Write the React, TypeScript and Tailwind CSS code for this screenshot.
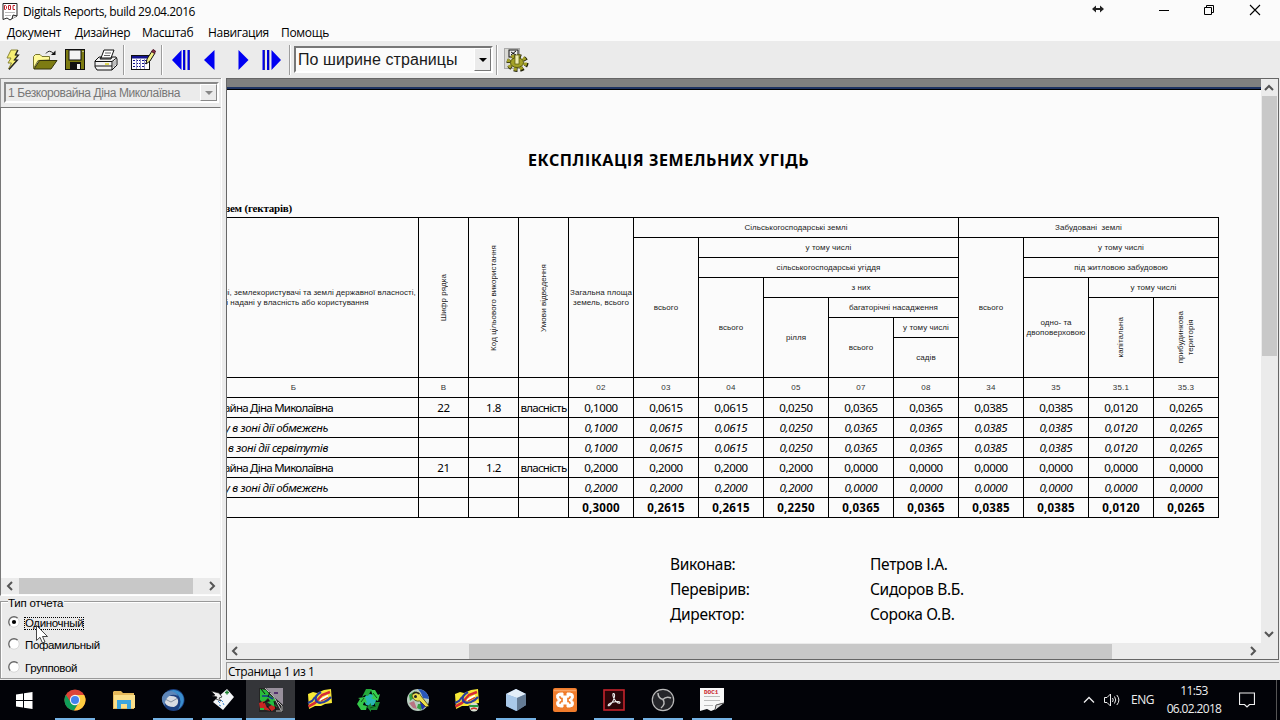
import type { ReactNode } from "react";
import clsx from "clsx";

const menuItems = [
  { label: "Документ", className: "w-[68px]" },
  { label: "Дизайнер", className: "w-[67px]" },
  { label: "Масштаб", className: "w-[66px]" },
  { label: "Навигация", className: "w-[73px]" },
  { label: "Помощь", className: "w-[60px]" },
];

type HeaderCell = { text: string; place: string; vertical?: boolean };

const headerCells: HeaderCell[] = [
  {
    text: "Власники землі, землекористувачі та землі державної власності,\nякі надані у власність або користування",
    place: "col-start-1 row-start-1 row-span-8",
  },
  { text: "Шифр рядка", place: "col-start-2 row-start-1 row-span-8", vertical: true },
  { text: "Код цільового використання", place: "col-start-3 row-start-1 row-span-8", vertical: true },
  { text: "Умови відведення", place: "col-start-4 row-start-1 row-span-8", vertical: true },
  { text: "Загальна площа\nземель, всього", place: "col-start-5 row-start-1 row-span-8" },
  { text: "Сільськогосподарські землі", place: "col-start-6 col-span-5 row-start-1" },
  { text: "всього", place: "col-start-6 row-start-2 row-span-7" },
  { text: "у тому числі", place: "col-start-7 col-span-4 row-start-2" },
  { text: "сільськогосподарські угіддя", place: "col-start-7 col-span-4 row-start-3" },
  { text: "всього", place: "col-start-7 row-start-4 row-span-5" },
  { text: "з них", place: "col-start-8 col-span-3 row-start-4" },
  { text: "рілля", place: "col-start-8 row-start-5 row-span-4" },
  { text: "багаторічні насадження", place: "col-start-9 col-span-2 row-start-5" },
  { text: "всього", place: "col-start-9 row-start-6 row-span-3" },
  { text: "у тому числі", place: "col-start-10 row-start-6" },
  { text: "садів", place: "col-start-10 row-start-7 row-span-2" },
  { text: "Забудовані  землі", place: "col-start-11 col-span-4 row-start-1" },
  { text: "всього", place: "col-start-11 row-start-2 row-span-7" },
  { text: "у тому числі", place: "col-start-12 col-span-3 row-start-2" },
  { text: "під житловою забудовою", place: "col-start-12 col-span-3 row-start-3" },
  { text: "одно- та\nдвоповерховою", place: "col-start-12 row-start-4 row-span-5" },
  { text: "у тому числі", place: "col-start-13 col-span-2 row-start-4" },
  { text: "капітальна", place: "col-start-13 row-start-5 row-span-4", vertical: true },
  { text: "прибудинкова\nтериторія", place: "col-start-14 row-start-5 row-span-4", vertical: true },
];

const columnCodes = ["Б", "В", "", "", "02", "03", "04", "05", "07", "08", "34", "35", "35.1", "35.3"];

type Row = { name: string; kind: "plain" | "italic" | "total"; cells: string[] };

const rows: Row[] = [
  {
    name: "Безкоровайна Діна Миколаївна",
    kind: "plain",
    cells: ["22", "1.8", "власність", "0,1000", "0,0615", "0,0615", "0,0250", "0,0365", "0,0365", "0,0385", "0,0385", "0,0120", "0,0265"],
  },
  {
    name: "у в зоні дії обмежень",
    kind: "italic",
    cells: ["", "", "", "0,1000", "0,0615", "0,0615", "0,0250", "0,0365", "0,0365", "0,0385", "0,0385", "0,0120", "0,0265"],
  },
  {
    name: "у в зоні дії сервітутів",
    kind: "italic",
    cells: ["", "", "", "0,1000", "0,0615", "0,0615", "0,0250", "0,0365", "0,0365", "0,0385", "0,0385", "0,0120", "0,0265"],
  },
  {
    name: "Безкоровайна Діна Миколаївна",
    kind: "plain",
    cells: ["21", "1.2", "власність", "0,2000", "0,2000", "0,2000", "0,2000", "0,0000", "0,0000", "0,0000", "0,0000", "0,0000", "0,0000"],
  },
  {
    name: "у в зоні дії обмежень",
    kind: "italic",
    cells: ["", "", "", "0,2000", "0,2000", "0,2000", "0,2000", "0,0000", "0,0000", "0,0000", "0,0000", "0,0000", "0,0000"],
  },
  {
    name: "",
    kind: "total",
    cells: ["", "", "", "0,3000", "0,2615", "0,2615", "0,2250", "0,0365", "0,0365", "0,0385", "0,0385", "0,0120", "0,0265"],
  },
];

const signatures = [
  ["Виконав:", "Петров І.А."],
  ["Перевірив:", "Сидоров В.Б."],
  ["Директор:", "Сорока О.В."],
];

function Chevron({ dir }: { dir: "left" | "right" | "up" | "down" }) {
  const d = {
    left: "M7 1 L3 5 L7 9",
    right: "M3 1 L7 5 L3 9",
    up: "M1 7 L5 3 L9 7",
    down: "M1 3 L5 7 L9 3",
  }[dir];
  return (
    <svg width="10" height="10" viewBox="0 0 10 10" className="shrink-0">
      <path d={d} fill="none" stroke="#555" strokeWidth="2" />
    </svg>
  );
}

function TitleBar() {
  return (
    <div className="flex h-[22px] items-center pl-[2px]">
      <svg width="16" height="18" viewBox="0 0 16 18" className="mt-px shrink-0">
        <path d="M1 .5 H15 V13 L11 15 L8 17 L5 15 L1 16.5 Z" fill="#fff" stroke="#222" />
        <path d="M10 16 L11 12 L15 13" fill="#ddd" stroke="#222" />
        <path d="M2.5 2.5 v4 h1 l1 -1 v-2 l-1 -1 z M6.5 2.5 h2 v4 h-2 z M13 2.5 h-2 v4 h2" fill="none" stroke="#c3222c" />
        <path d="M3 9.5 H13 M3 12.5 H9" stroke="#bbb" />
      </svg>
      <span className="ml-[5px] mt-[2px] text-[12px] tracking-[-0.42px] whitespace-nowrap">
        Digitals Reports, build 29.04.2016
      </span>
      <div className="ml-auto flex items-center">
        <svg width="12" height="8" viewBox="0 0 12 8" className="mr-[54px] -mt-[5px]">
          <path d="M0 4 L4 .5 V3 H8 V.5 L12 4 L8 7.5 V5 H4 V7.5 Z" fill="#222" />
        </svg>
        <svg width="12" height="10" viewBox="0 0 12 10" className="mr-[33px] -mt-[2px]">
          <path d="M1 5.500 H11" stroke="#000" />
        </svg>
        <svg width="12" height="12" viewBox="0 0 12 12" className="mr-[34px] -mt-[2px]">
          <path d="M1.500 3.500 H8.500 V10.500 H1.500 Z M3.500 3.500 V1.500 H10.500 V8.500 H8.500" fill="none" stroke="#000" />
        </svg>
        <svg width="12" height="12" viewBox="0 0 12 12" className="mr-[19px] -mt-[2px]">
          <path d="M1 1 L11 11 M11 1 L1 11" stroke="#000" strokeWidth="1.1" />
        </svg>
      </div>
    </div>
  );
}

function MenuBar() {
  return (
    <div className="flex h-[19px] items-center pl-[7px] text-[12px] tracking-[-0.3px]">
      {menuItems.map((item) => (
        <span key={item.label} className={clsx("mt-[3px] shrink-0 whitespace-nowrap", item.className)}>
          {item.label}
        </span>
      ))}
    </div>
  );
}

function Separator({ className }: { className?: string }) {
  return <div className={clsx("h-[30px] w-[2px] shrink-0 border-r border-l border-l-[#9d9d9d] border-r-white", className)} />;
}

function Toolbar() {
  return (
    <div className="flex h-[37px] items-center bg-[#ebebeb]">
      <svg width="16" height="22" viewBox="0 0 16 22" className="ml-[6px] shrink-0">
        <path d="M5 1 H11.500 L9 6 H12 L8 11 H11 L2.500 20 L5.500 14 H2 L5 9 H1 Z" fill="#f5ee72" stroke="#8b8635" />
        <path d="M12 1 L9.500 6 H12.500 L8.500 11 H11.500 L3 20.500" fill="none" stroke="#222" strokeWidth="1.200" />
      </svg>
      <svg width="26" height="20" viewBox="0 0 26 20" className="ml-[11px] shrink-0">
        <path d="M.5 18.500 V6.500 L2.500 4.500 H7 L9 6.500 H16.500 V10 L5 10.500 Z" fill="#fffa9a" stroke="#77752c" />
        <path d="M1 19 L6.500 10.500 H24 L18 19 Z" fill="#7d7c12" stroke="#33330c" />
        <path d="M13 3.500 Q16 -1 20.500 3.500" fill="none" stroke="#222" />
        <path d="M22.500 .5 V5 H18 Z" fill="#111" />
      </svg>
      <svg width="20" height="21" viewBox="0 0 20 21" className="ml-[6px] shrink-0">
        <rect x=".5" y=".5" width="19" height="20" fill="#7d7c12" stroke="#111" />
        <rect x="4" y="1" width="12" height="10" fill="#f4f4f4" stroke="#111" />
        <rect x="5" y="13" width="11" height="8" fill="#111" />
        <rect x="12" y="15" width="3" height="5" fill="#eee" />
        <path d="M17.500 2.500 h1" stroke="#fff" />
      </svg>
      <svg width="24" height="22" viewBox="0 0 24 22" className="ml-[9px] shrink-0">
        <path d="M7 9 L10 1 H20 L17 9 Z" fill="#fff" stroke="#111" />
        <path d="M11 4 H17 M10 6.500 H16" stroke="#666" />
        <path d="M1 12 L5 8 H7 L6 10 H17 L18 8 H22 L23 10 V16 L18 21 H3 L1 18 Z" fill="#f2f2f2" stroke="#111" />
        <path d="M1 12.500 H18 L22.500 9 M18 12.500 V21 M1 17 H18" fill="none" stroke="#111" />
        <path d="M11 15 H15" stroke="#d8cf27" strokeWidth="1.500" />
        <path d="M20 12 V18 M22 11 V16" stroke="#888" />
      </svg>
      <Separator className="ml-[5px]" />
      <svg width="25" height="22" viewBox="0 0 25 22" className="ml-[6px] shrink-0">
        <rect x=".5" y="6.500" width="18" height="14" fill="#fff" stroke="#111" />
        <rect x="1" y="7" width="17" height="2.500" fill="#14148f" />
        <path d="M2 11.500 H17 M2 14.500 H17 M2 17.500 H14" stroke="#14148f" strokeDasharray="2 1" />
        <path d="M5.500 10 V20 M9.500 10 V20 M13.500 10 V20" stroke="#9494c5" />
        <path d="M15 15 L16 10 L21 2 L24 4 L19 12 Z" fill="#f3ef88" stroke="#111" />
        <path d="M20.500 2.500 L22 .5 L24.500 2 L23.500 4.500 Z" fill="#8b2f45" stroke="#50192a" />
      </svg>
      <Separator className="ml-[5px]" />
      <svg width="19" height="20" viewBox="0 0 19 20" className="ml-[9px] shrink-0">
        <path d="M9.500 0 V20 L0 10 Z M11 0 h2 V20 h-2 Z M15.500 0 h2 V20 h-2 Z" fill="#0000f2" />
        <path d="M13 0 V20 M17.500 0 V20" stroke="#00005e" strokeWidth=".6" />
      </svg>
      <svg width="11" height="20" viewBox="0 0 11 20" className="ml-[13px] shrink-0">
        <path d="M10.500 0 V20 L0 10 Z" fill="#0000f2" />
      </svg>
      <svg width="11" height="20" viewBox="0 0 11 20" className="ml-[23px] shrink-0">
        <path d="M.5 0 V20 L10.500 10 Z" fill="#0000f2" />
      </svg>
      <svg width="19" height="20" viewBox="0 0 19 20" className="ml-[13px] shrink-0">
        <path d="M9.500 0 V20 L19 10 Z M.5 0 h2 V20 h-2 Z M5 0 h2 V20 h-2 Z" fill="#0000f2" />
        <path d="M2.500 0 V20 M7 0 V20" stroke="#00005e" strokeWidth=".6" />
      </svg>
      <Separator className="ml-[8px]" />
      <div className="ml-[3px] flex h-[27px] w-[199px] shrink-0 items-center border-2 border-[#777] border-r-white border-b-white bg-[#fbfbfb] font-['Liberation_Sans',sans-serif]">
        <span className="pl-[2px] text-[16px] leading-none tracking-[0.08px] whitespace-nowrap text-[#1a1a1a]">
          По ширине страницы
        </span>
        <div className="ml-auto flex h-full w-[17px] items-center justify-center border border-white border-r-[#777] border-b-[#777] bg-[#ebebeb]">
          <svg width="8" height="4" viewBox="0 0 8 4">
            <path d="M0 0 H8 L4 4 Z" fill="#000" />
          </svg>
        </div>
      </div>
      <Separator className="ml-[3px]" />
      <svg width="25" height="25" viewBox="0 0 25 25" className="ml-[6px] shrink-0">
        <rect x=".5" y="1.500" width="15" height="20" fill="#d9d9d4" stroke="#aaa" />
        <rect x="5" y="3" width="9" height="7" fill="#eee" stroke="#111" />
        <path d="M7 5 L12 8 M12 4 L7 8" stroke="#111" />
        <ellipse cx="13.500" cy="16" rx="9" ry="7" fill="none" stroke="#22220a" strokeWidth="4" strokeDasharray="3.600 2.680" />
        <ellipse cx="13" cy="15.500" rx="8.500" ry="6.500" fill="none" stroke="#a3a126" strokeWidth="3.500" strokeDasharray="3 2.890" />
        <ellipse cx="13" cy="15.500" rx="6.500" ry="5" fill="#a3a126" stroke="#56550f" />
        <rect x="11" y="8" width="4" height="9" fill="#eeedb0" stroke="#55540f" strokeWidth=".7" />
      </svg>
    </div>
  );
}

function Radio({ label, checked, className }: { label: string; checked?: boolean; className?: string }) {
  return (
    <div className={clsx("flex h-[14px] items-center", className)}>
      <svg width="12" height="12" viewBox="0 0 12 12" className="-mt-[2px] shrink-0">
        <circle cx="6" cy="6" r="5" fill="#fff" />
        <path d="M2.300 9.700 A5.200 5.200 0 0 1 9.700 2.300" fill="none" stroke="#666" strokeWidth="1.300" />
        <path d="M9.700 2.300 A5.200 5.200 0 0 1 2.300 9.700" fill="none" stroke="#d8d8d8" />
        {checked && <circle cx="6" cy="6" r="2.100" fill="#000" />}
      </svg>
      <span
        className={clsx(
          "ml-[4px] border border-dotted text-[11.500px] leading-[11px] tracking-[-0.35px] whitespace-nowrap",
          checked ? "border-black" : "border-transparent",
        )}
      >
        {label}
      </span>
    </div>
  );
}

function Sidebar() {
  return (
    <div className="flex w-[221px] shrink-0 flex-col font-['Liberation_Sans',sans-serif]">
      <div className="h-[29px] border-t border-l border-[#999] pt-[3px] pl-[3px]">
        <div className="flex h-[21px] w-[215px] items-center border-2 border-[#888] border-r-white border-b-white">
          <span className="pl-[2px] text-[12px] leading-none tracking-[-0.4px] whitespace-nowrap text-[#777]">
            1 Безкоровайна Діна Миколаївна
          </span>
          <div className="ml-auto flex h-full w-[17px] items-center justify-center border border-white border-r-[#888] border-b-[#888]">
            <svg width="8" height="4" viewBox="0 0 8 4">
              <path d="M0 0 H8 L4 4 Z" fill="#888" />
            </svg>
          </div>
        </div>
      </div>
      <div className="flex h-[489px] flex-col border border-[#777] border-r-[#f4f4f4] border-b-white bg-[#fbfbfb]">
        <div className="mt-auto mb-px flex h-[16px] items-center bg-[#ebebeb] pr-[3px] pl-[4px]">
          <Chevron dir="left" />
          <div className="ml-[4px] h-full w-[174px] bg-[#c8c8c8]" />
          <div className="ml-auto flex">
            <Chevron dir="right" />
          </div>
        </div>
      </div>
      <div className="mt-[5px] h-[78px] border border-[#999] pl-[7px] shadow-[inset_1px_1px_0_#fff]">
        <p className="-mt-[5px] w-[56px] bg-[#ebebeb] text-[11.500px] leading-[13px] tracking-[-0.2px] whitespace-nowrap">
          Тип отчета
        </p>
        <Radio label="Одиночный" checked className="mt-[6px]" />
        <Radio label="Пофамильный" className="mt-[8px]" />
        <Radio label="Групповой" className="mt-[9px]" />
      </div>
    </div>
  );
}

function Cell({ className, children }: { className?: string; children?: ReactNode }) {
  return (
    <div className={clsx("flex items-center justify-center border-r border-b border-black whitespace-pre", className)}>
      {children}
    </div>
  );
}

function ReportTable() {
  return (
    <div className="-ml-[58px] grid w-[1050px] shrink-0 grid-cols-[250px_50px_50px_50px_repeat(10,65px)] grid-rows-[repeat(15,20px)] border-t border-black">
      {headerCells.map((cell, i) => (
        <Cell
          key={i}
          className={clsx(
            "text-center font-['Liberation_Sans',sans-serif] text-[8px] leading-[10px] tracking-[0.06px] text-[#222]",
            cell.place,
          )}
        >
          <span className={cell.vertical ? "rotate-180 [writing-mode:vertical-rl]" : undefined}>{cell.text}</span>
        </Cell>
      ))}
      {columnCodes.map((code, i) => (
        <Cell key={i} className="font-['Liberation_Sans',sans-serif] text-[8px] tracking-[0.2px] text-[#333]">
          {code}
        </Cell>
      ))}
      {rows.map((row, i) => (
        <div
          key={i}
          className={clsx(
            "contents text-[11.500px] leading-none",
            row.kind === "plain" && "tracking-[-0.4px]",
            row.kind === "italic" && "tracking-[-0.3px] italic",
            row.kind === "total" && "font-bold tracking-[0.25px]",
          )}
        >
          <div
            className={clsx(
              "flex items-center justify-end border-r border-b border-black whitespace-nowrap",
              row.kind === "plain" ? "pr-[85px] tracking-[-0.75px]" : "pr-[90px] tracking-[-0.4px]",
            )}
          >
            {row.name}
          </div>
          {row.cells.map((value, j) => (
            <Cell key={j} className={value === "власність" ? "tracking-[-0.75px]" : undefined}>
              {value}
            </Cell>
          ))}
        </div>
      ))}
    </div>
  );
}

function Viewer() {
  return (
    <div className="flex min-w-0 flex-1 flex-col">
      <div className="flex h-[582px] border border-[#666]">
        <div className="flex w-[1034px] shrink-0 flex-col">
          <div className="h-[8px] bg-[#808080]" />
          <div className="h-[2px] bg-[#1f3362]" />
          <div className="h-px bg-black" />
          <div className="flex h-[553px] flex-col overflow-hidden bg-[#fbfbfb] font-['Noto_Sans',sans-serif]">
            <h1 className="mt-[60px] ml-[301px] text-[16px] leading-[20px] font-bold tracking-[0.58px] whitespace-nowrap">
              ЕКСПЛІКАЦІЯ ЗЕМЕЛЬНИХ УГІДЬ
            </h1>
            <p className="mt-[31px] -ml-[10px] w-[75px] text-right font-['Liberation_Serif',serif] text-[11px] leading-[14px] font-bold tracking-[-0.2px] whitespace-nowrap">
              зем (гектарів)
            </p>
            <div className="mt-[2px]">
              <ReportTable />
            </div>
            <div className="mt-[34px] ml-[443px] grid grid-cols-[200px_200px] text-[15.500px] leading-[25px] tracking-[-0.3px]">
              {signatures.flat().map((text) => (
                <span key={text}>{text}</span>
              ))}
            </div>
          </div>
          <div className="flex h-[16px] items-center bg-[#ebebeb] px-[3px]">
            <Chevron dir="left" />
            <div className="ml-[229px] h-[15px] w-[643px] bg-[#c8c8c8]" />
            <div className="ml-auto flex">
              <Chevron dir="right" />
            </div>
          </div>
        </div>
        <div className="flex flex-1 flex-col items-center bg-[#ebebeb] py-[4px] pr-px">
          <Chevron dir="up" />
          <div className="mt-[3px] h-[260px] w-[15px] bg-[#c8c8c8]" />
          <div className="mt-auto mb-[16px] flex">
            <Chevron dir="down" />
          </div>
        </div>
      </div>
      <div className="mt-[2px] h-[18px] border-t border-l border-[#999] pl-[1px] text-[12px] leading-[17px] tracking-[-0.45px] whitespace-nowrap">
        Страница 1 из 1
      </div>
    </div>
  );
}

function ChromeIcon() {
  return (
    <svg width="22" height="22" viewBox="0 0 24 24">
      <circle cx="12" cy="12" r="11.500" fill="#dc4437" />
      <path d="M2 6.200 A11.500 11.500 0 0 0 11 23.500 L16 14.500 L12 12 L7 14 Z" fill="#109d58" />
      <path d="M12 6.500 H22 A11.500 11.500 0 0 1 11 23.500 L16.500 14.500 Z" fill="#ffcd40" />
      <circle cx="12" cy="12" r="5.600" fill="#f4f4f4" />
      <circle cx="12" cy="12" r="4.400" fill="#4382ee" />
    </svg>
  );
}

function FolderIcon() {
  return (
    <svg width="22" height="20" viewBox="0 0 22 20">
      <path d="M0 2 L1 1 H8 L10 3 H21 V19 H0 Z" fill="#e5b95a" />
      <rect x="1" y="5" width="21" height="13" fill="#fadf8a" />
      <path d="M4 19 V10 H18 V19 H14 V14 H8 V19 Z" fill="#3ba5df" />
    </svg>
  );
}

function ThunderbirdIcon() {
  return (
    <svg width="24" height="24" viewBox="0 0 24 24">
      <circle cx="12.500" cy="12" r="11" fill="#1c4080" />
      <path d="M6 4 Q14 -1 21 6 Q26 14 17 22 Q22 13 17 7 Q12 3 6 4" fill="#3a8dcc" />
      <path d="M4 11 Q6 7 10 8 Q16 8 17 12 Q18 17 13 19 Q6 19 4 15 Z" fill="#d9dce2" />
      <path d="M4 11 L10 14 L16 10.500" fill="none" stroke="#8790a0" />
      <path d="M1 9 Q3 3 10 3 Q15 4 17 8 Q11 5 7 9 Q3 13 4 18 Q0 14 1 9" fill="#5f86b8" />
    </svg>
  );
}

function MailIcon() {
  return (
    <svg width="24" height="24" viewBox="0 0 24 24">
      <path d="M7 10 L17 1 L24 9 L13 22 L3 14 Z" fill="#f4f6f8" />
      <path d="M1 3 L9 5 L12 9 L9 10 L11 13 L6 11 L7 9 L2 8 L5 7 Z" fill="#eee" stroke="#111" strokeWidth=".7" />
      <path d="M17 2.500 V6.500 M15 4.500 H19" stroke="#248737" strokeWidth="1.500" />
      <path d="M8 13 l2 2 M11 12 l2 2 M9 17 l2 1 M13 15 l1 2" stroke="#448bd0" />
    </svg>
  );
}

function MapIcon() {
  return (
    <svg width="24" height="24" viewBox="0 0 24 24">
      <rect width="24" height="24" fill="#252525" />
      <path d="M7 0 H24 V17 L14 8 Z" fill="#98909c" />
      <path d="M1 1 L7 2 L12 8 L17 12 L13 16 L9 10 L4 15 L1 12 Z" fill="#29bd3b" />
      <path d="M3 8 L9 8 L14 11" fill="none" stroke="#15378b" strokeWidth="1.500" />
      <path d="M0 15 L5 13 L8 20 L14 16 L17 20 L13 23 L1 21 Z" fill="#c62723" />
      <path d="M8 14 L14 13 L18 19 L14 18 Z M1 20 h4 v2 h-4 z" fill="#25bd42" />
      <path d="M6 0 L15 9 L22 22 M19 14 L23 18 V23 H17" fill="none" stroke="#bbb" />
      <path d="M15 5 h4" stroke="#54306e" strokeWidth="2" />
      <path d="M2 1 L6 6 M11 4 L9 9 M4 15 L10 12 M15 13 L17 22 M8 18 L12 23" fill="none" stroke="#111" />
    </svg>
  );
}

function BannerIcon({ badge }: { badge?: boolean }) {
  return (
    <svg width="26" height="24" viewBox="0 0 26 24">
      <path d="M1 6 L6 4 L10 5 L17 2 L24 1 L25 15 L18 16 L14 18 L8 18 L2 21 Z" fill="#f7e936" />
      <path d="M1 15 L5 13 L8 9" fill="none" stroke="#293d9d" strokeWidth="2" />
      <path d="M1.500 18.500 L8 15 L15 7 L23 4" fill="none" stroke="#d82d35" strokeWidth="2.600" />
      <path d="M14 4 Q7 8 9 12.500 Q11 16 17 14 Q21 12.500 24 9" fill="none" stroke="#293d9d" strokeWidth="2.300" />
      <path d="M13 12 L21 7.500" stroke="#fff" strokeWidth="1.500" />
      <path d="M14 13 L21 9.500" stroke="#d82d35" strokeWidth="1.300" />
      {badge && (
        <g>
          <circle cx="20" cy="19" r="4.500" fill="#d7ded0" />
          <path d="M16 18 h8" stroke="#279b41" strokeWidth="2" />
          <path d="M17 21 l3 -1 l3 1" fill="none" stroke="#c8332b" strokeWidth="1.500" />
        </g>
      )}
    </svg>
  );
}

function RecycleIcon() {
  return (
    <svg width="24" height="24" viewBox="0 0 24 24">
      <circle cx="13" cy="12" r="6" fill="#28b7b4" />
      <path d="M5 9 L9 1 H15 L11 8 L8 7 Z" fill="#24a83c" />
      <path d="M14 2 H18 L21 7 L23 6 L21 13 L14 10 L16 9 Z" fill="#36cc4e" />
      <path d="M23 14 L20 22 H14 V24 L10 19 L14 15 V18 H18 L18 14 Z" fill="#198b31" />
      <path d="M9 22 H4 L0 16 L3 11 L1 10 L8 9 L10 15 L7 14 L6 17 L10 18 Z" fill="#35c84a" />
      <path d="M4 14 L7 10 M16 5 L20 10 M13 20 L19 18" stroke="#0b5419" />
    </svg>
  );
}

function KeyGlobeIcon() {
  return (
    <svg width="24" height="24" viewBox="0 0 24 24">
      <circle cx="12" cy="12" r="11" fill="#b8cdbf" />
      <path d="M12 1 A11 11 0 0 1 23 11 L17 10 L15 5 Z" fill="#2857b9" />
      <path d="M3 7 L9 3 L9 9 L4 13 Z M12 16 H18 L15 22 L11 20 Z" fill="#349f40" />
      <path d="M3 15 L8 13 L11 21 L7 20 Z" fill="#b87383" />
      <path d="M14 14 h6 v4 l-4 4 z" fill="#2233a8" />
      <path d="M6 8 Q6 4 10 4 Q14 4 15 8 L23 18 L20 19 L14 13 Q8 14 6 8 Z" fill="#eee04e" stroke="#444010" strokeWidth=".8" />
      <path d="M7 6 Q10 3 13 6" fill="none" stroke="#222" strokeWidth="1.400" />
      <circle cx="9.500" cy="8.500" r="1.500" fill="#222" />
    </svg>
  );
}

function CubeIcon() {
  return (
    <svg width="22" height="24" viewBox="0 0 22 24">
      <path d="M11 1 L21 6 V17 L11 23 L1 18 V6 Z" fill="#88acd8" />
      <path d="M1 6 L11 1 L21 6 L12 10 Z" fill="#e3eef8" />
      <path d="M1 6 L12 10 V23 L1 18 Z" fill="#a9c9e9" />
      <path d="M12 10 L21 6 V17 L12 23 Z" fill="#647b94" />
    </svg>
  );
}

function XamppIcon() {
  return (
    <svg width="24" height="24" viewBox="0 0 24 24">
      <rect width="24" height="24" rx="2" fill="#f07c2c" />
      <path d="M1 2.500 H23" stroke="#f9a566" strokeWidth="1.500" />
      <path
        d="M8 5 H10 V8 H14 V5 H17 Q20.500 5 20.500 8.500 Q20.500 11 18.500 12 Q20.500 13.500 20.500 15.500 Q20.500 19 17 19 H14 V16 H10 V19 H7.500 Q3.500 19 3.500 15.500 Q3.500 13.500 5.500 12 Q3.500 11 3.500 8.500 Q3.500 5 8 5 Z"
        fill="#fff"
        stroke="#fff"
        strokeLinejoin="round"
      />
      <path
        d="M7 8.200 V9.200 Q7.500 10.500 9 10.500 V13.500 Q7 13.500 7 15.800 M17 8.200 V9.200 Q16.500 10.500 15 10.500 V13.500 Q17 13.500 17 15.800"
        fill="none"
        stroke="#f07c2c"
        strokeWidth="1.700"
      />
    </svg>
  );
}

function AcrobatIcon() {
  return (
    <svg width="22" height="22" viewBox="0 0 22 22">
      <rect x="1" y="1" width="20" height="20" fill="#2a0508" stroke="#c5242c" strokeWidth="1.600" />
      <path
        d="M10 4.500 Q12 4 11.500 7.500 Q10.500 13 6.500 16.500 Q4.500 17.500 5.500 15.500 Q9 12.500 15 12.500 Q18 13 16.500 14.300 Q13.500 14.500 10.500 8.500 Q9.500 6 10 4.500"
        fill="none"
        stroke="#eee"
        strokeWidth="1.100"
      />
    </svg>
  );
}

function ObsIcon() {
  return (
    <svg width="24" height="24" viewBox="0 0 24 24">
      <circle cx="12" cy="12" r="10.700" fill="#25262a" stroke="#b9b9b9" strokeWidth="1.200" />
      <g fill="none" stroke="#bababa" strokeWidth="1.500">
        <path d="M7 5 Q7 10 12 11.500" />
        <path d="M12 11.500 Q15 8 20 10" />
        <path d="M12 11.500 Q15 16 10 20" />
      </g>
    </svg>
  );
}

function DocIcon() {
  return (
    <svg width="24" height="24" viewBox="0 0 24 24">
      <path d="M0 0 H24 V15 L19 16 L16 21 L11 23 L7 21 L0 23 Z" fill="#f8f8f8" />
      <path d="M15 22 L16 17 L24 15" fill="#ddd" stroke="#555" />
      <path d="M4 8.500 H20 M4 12.500 H20 M4 17.500 H13" stroke="#bbb" />
      <text x="4" y="6" fontSize="6" fontWeight="bold" fill="#c91c2d" fontFamily="Liberation Mono, monospace">
        DOC1
      </text>
    </svg>
  );
}

const taskbarApps: { icon: ReactNode; running?: boolean; active?: boolean }[] = [
  { icon: <ChromeIcon />, running: true },
  { icon: <FolderIcon /> },
  { icon: <ThunderbirdIcon />, running: true },
  { icon: <MailIcon />, running: true },
  { icon: <MapIcon />, active: true },
  { icon: <BannerIcon /> },
  { icon: <RecycleIcon /> },
  { icon: <KeyGlobeIcon /> },
  { icon: <BannerIcon badge /> },
  { icon: <CubeIcon />, running: true },
  { icon: <XamppIcon /> },
  { icon: <AcrobatIcon />, running: true },
  { icon: <ObsIcon />, running: true },
  { icon: <DocIcon />, running: true },
];

function Taskbar() {
  return (
    <div className="flex h-[40px] bg-[#020308] text-[#eee]">
      <div className="flex w-[50px] items-center pl-[16px]">
        <svg width="17" height="17" viewBox="0 0 17 17">
          <path d="M0 2.400 L7 1.400 V8 H0 Z M8 1.200 L16.500 0 V8 H8 Z M0 9 H7 V15.600 L0 14.600 Z M8 9 H16.500 V17 L8 15.800 Z" fill="#fff" />
        </svg>
      </div>
      {taskbarApps.map((app, i) => (
        <div key={i} className={clsx("flex w-[49px] flex-col items-center", app.active && "bg-[#343539]")}>
          <div className="flex h-[38px] items-center pt-[1px]">{app.icon}</div>
          {app.running && <div className="h-[2px] w-[40px] bg-[#74b2e4]" />}
          {app.active && <div className="h-[2px] w-full bg-[#74b2e4]" />}
        </div>
      ))}
      <div className="ml-auto flex items-center">
        <svg width="12" height="8" viewBox="0 0 12 8">
          <path d="M1 6.500 L6 1.500 L11 6.500" fill="none" stroke="#eee" strokeWidth="1.300" />
        </svg>
        <svg width="17" height="14" viewBox="0 0 17 14" className="ml-[9px]">
          <path d="M.5 4.500 H3 L6.500 1 V13 L3 9.500 H.5 Z M8.500 5 Q10 7 8.500 9 M10.500 3.500 Q13 7 10.500 10.500 M12.800 2 Q17 7 12.800 12" fill="none" stroke="#eee" />
        </svg>
        <span className="ml-[10px] w-[26px] text-[12px] tracking-[-0.5px]">ENG</span>
        <div className="-mt-px ml-[9px] w-[56px] text-center text-[12px] leading-[18px] tracking-[-0.65px] whitespace-nowrap">
          <div>11:53</div>
          <div>06.02.2018</div>
        </div>
        <svg width="16" height="16" viewBox="0 0 16 16" className="mr-[21px] ml-[17px]">
          <path d="M.5 1 H15.500 V12.500 H10.500 L8 15 L5.500 12.500 H.5 Z" fill="none" stroke="#eee" strokeWidth="1.200" />
        </svg>
        <div className="mr-[3px] h-[40px] w-px bg-[#555]" />
      </div>
    </div>
  );
}

export default function App() {
  return (
    <div className="relative flex h-[720px] w-[1280px] flex-col overflow-hidden bg-[#fbfbfb] font-['Open_Sans','Noto_Sans',sans-serif] text-black">
      <TitleBar />
      <MenuBar />
      <Toolbar />
      <div className="flex h-[602px] bg-[#ebebeb] pr-px">
        <Sidebar />
        <div className="w-[5px] shrink-0 border-l border-white" />
        <Viewer />
      </div>
      <Taskbar />
      {/* mouse pointer */}
      <svg width="13" height="20" viewBox="0 0 13 20" className="absolute top-[625px] left-[36px]">
        <path d="M.5 .5 V15.500 L4 12.300 L6.500 18 L9 17 L6.500 11.500 H11.500 Z" fill="#fff" stroke="#333" strokeWidth=".9" />
      </svg>
    </div>
  );
}
